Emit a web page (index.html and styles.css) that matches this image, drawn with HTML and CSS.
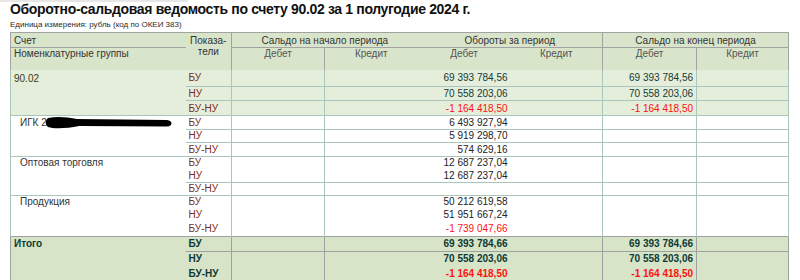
FILE: index.html
```html
<!DOCTYPE html>
<html lang="ru">
<head>
<meta charset="utf-8">
<title>ОСВ 90.02</title>
<link rel="stylesheet" href="styles.css">
</head>
<body>
<div class="topbar"></div>
<div class="page">
  <h1 class="title">Оборотно-сальдовая ведомость по счету 90.02 за 1 полугодие 2024 г.</h1>
  <div class="unit">Единица измерения: рубль (код по ОКЕИ 383)</div>
  <table class="osv">
    <colgroup>
      <col class="c-acc"><col class="c-ind"><col class="c-num"><col class="c-num"><col class="c-num"><col class="c-num2"><col class="c-num3"><col class="c-num2">
    </colgroup>
    <thead>
      <tr class="hr1">
        <th class="h-left">Счет</th>
        <th class="h-ind" rowspan="2">Показа-<br>тели</th>
        <th class="h-grp vl" colspan="2">Сальдо на начало периода</th>
        <th class="h-grp" colspan="2">Обороты за период</th>
        <th class="h-grp vl vr" colspan="2">Сальдо на конец периода</th>
      </tr>
      <tr class="hr2">
        <th class="h-left">Номенклатурные группы</th>
        <th class="h-sub vl">Дебет</th>
        <th class="h-sub vl">Кредит</th>
        <th class="h-sub">Дебет</th>
        <th class="h-sub">Кредит</th>
        <th class="h-sub vl">Дебет</th>
        <th class="h-sub vl vr">Кредит</th>
      </tr>
    </thead>
    <tbody class="acc">
      <tr class="r17">
        <td class="name">90.02</td><td class="ind">БУ</td><td></td><td></td><td class="num">69 393 784,56</td><td></td><td class="num">69 393 784,56</td><td></td>
      </tr>
      <tr class="r14 sep">
        <td></td><td class="ind">НУ</td><td></td><td></td><td class="num">70 558 203,06</td><td></td><td class="num">70 558 203,06</td><td></td>
      </tr>
      <tr class="r15 sep">
        <td></td><td class="ind">БУ-НУ</td><td></td><td></td><td class="num neg">-1 164 418,50</td><td></td><td class="num neg">-1 164 418,50</td><td></td>
      </tr>
    </tbody>
    <tbody class="grp">
      <tr class="r13 top">
        <td class="sub">ИГК 2<svg class="redact" width="128" height="13" viewBox="0 0 128 13" aria-hidden="true"><path d="M3 2 C12 0 22 1 32 3 L122 4 C128 4.5 128 10.5 122 10.5 L34 10 C22 12.5 9 13 3 11 C0 9 0 4 3 2 Z" fill="#000"/></svg></td><td class="ind">БУ</td><td></td><td></td><td class="num">6 493 927,94</td><td></td><td></td><td></td>
      </tr>
      <tr class="r13 sep">
        <td></td><td class="ind">НУ</td><td></td><td></td><td class="num">5 919 298,70</td><td></td><td></td><td></td>
      </tr>
      <tr class="r14 sep">
        <td></td><td class="ind">БУ-НУ</td><td></td><td></td><td class="num">574 629,16</td><td></td><td></td><td></td>
      </tr>
    </tbody>
    <tbody class="grp">
      <tr class="r13 top">
        <td class="sub">Оптовая торговля</td><td class="ind">БУ</td><td></td><td></td><td class="num">12 687 237,04</td><td></td><td></td><td></td>
      </tr>
      <tr class="r13">
        <td></td><td class="ind">НУ</td><td></td><td></td><td class="num">12 687 237,04</td><td></td><td></td><td></td>
      </tr>
      <tr class="r13 sep">
        <td></td><td class="ind">БУ-НУ</td><td></td><td></td><td></td><td></td><td></td><td></td>
      </tr>
    </tbody>
    <tbody class="grp">
      <tr class="r13 top">
        <td class="sub">Продукция</td><td class="ind">БУ</td><td></td><td></td><td class="num">50 212 619,58</td><td></td><td></td><td></td>
      </tr>
      <tr class="r13">
        <td></td><td class="ind">НУ</td><td></td><td></td><td class="num">51 951 667,24</td><td></td><td></td><td></td>
      </tr>
      <tr class="r15">
        <td></td><td class="ind">БУ-НУ</td><td></td><td></td><td class="num neg">-1 739 047,66</td><td></td><td></td><td></td>
      </tr>
    </tbody>
    <tbody class="total">
      <tr class="r15 top">
        <td class="name">Итого</td><td class="ind">БУ</td><td></td><td></td><td class="num">69 393 784,66</td><td></td><td class="num">69 393 784,66</td><td></td>
      </tr>
      <tr class="r15 sep">
        <td></td><td class="ind">НУ</td><td></td><td></td><td class="num">70 558 203,06</td><td></td><td class="num">70 558 203,06</td><td></td>
      </tr>
      <tr class="r15">
        <td></td><td class="ind">БУ-НУ</td><td></td><td></td><td class="num neg">-1 164 418,50</td><td></td><td class="num neg">-1 164 418,50</td><td></td>
      </tr>
    </tbody>
  </table>
</div>
</body>
</html>
```

FILE: styles.css
```css
* { box-sizing: border-box; }

html, body {
  margin: 0;
  background: #ffffff;
}

body {
  font-family: "Liberation Sans", Arial, sans-serif;
  color: #222;
}

.topbar {
  width: 188px;
  height: 2px;
  background: #e6e6e6;
}

.page {
  padding-left: 10px;
}

.title {
  margin: 0;
  font-size: 14px;
  line-height: 15px;
  font-weight: bold;
  letter-spacing: -0.35px;
  color: #111;
}

.unit {
  margin: 2px 0 2px;
  font-size: 8px;
  line-height: 11px;
  color: #2a2a2a;
}

.osv {
  border-collapse: collapse;
  table-layout: fixed;
  width: 779px;
  font-size: 10px;
  line-height: 11px;
}

.c-acc { width: 175px; }
.c-ind { width: 46px; }
.c-num { width: 93px; }
.c-num2 { width: 92px; }
.c-num3 { width: 94px; }

.osv thead th {
  background: #d9e5cb;
  font-weight: normal;
  color: #333;
  padding: 0;
  border-color: #a3a3a3;
}
.hr1 { height: 15px; }
.hr1 th { border-top: 1px solid #a3a3a3; }
.hr2 { height: 22px; }
.hr2 th { border-top: 1px solid #a3a3a3; vertical-align: top; padding-top: 2px; }
.osv thead th.h-left { text-align: left; padding-left: 3px; border-left: 1px solid #a3a3a3; }
.hr1 th.h-left { vertical-align: middle; }
.osv thead th.h-ind { vertical-align: top; padding-top: 2px; text-align: center; }
.osv thead th.h-grp { text-align: center; }
.osv thead th.h-sub { text-align: center; color: #555; }
.osv thead .vl { border-left: 1px solid #a3a3a3; }
.osv thead .vr { border-right: 1px solid #a3a3a3; }

.osv tbody td {
  padding: 0 3px;
  white-space: nowrap;
  overflow: visible;
  border-color: #a9c5bc;
}
.osv tbody td:nth-child(1),
.osv tbody td:nth-child(3),
.osv tbody td:nth-child(4),
.osv tbody td:nth-child(7),
.osv tbody td:nth-child(8) {
  border-left: 1px solid #a9c5bc;
}
.osv tbody td:nth-child(8) { border-right: 1px solid #a9c5bc; }

.osv tbody tr.top td { border-top: 1px solid #a9c5bc; }
.osv tbody tr.sep td:not(:first-child) { border-top: 1px solid #a9c5bc; }

.r13 { height: 13px; }
.r14 { height: 14px; }
.r15 { height: 15px; }
.r17 { height: 17px; }

.acc td { background: #e5eedb; }
.grp td { background: #ffffff; }

.name { color: #3a3a14; }
.sub { padding-left: 9px !important; color: #333; }
.ind { color: #7a2c18; }
.num { text-align: right; color: #222; }
.acc .num { color: #123a36; }
.neg, .acc .neg { color: #ff1010; }

.redact {
  vertical-align: -3px;
  margin-left: -2px;
}

.total td {
  background: #d7e4c7;
  font-weight: bold;
  color: #0d3a36;
  border-color: #a0a0a0 !important;
}
.total .ind { color: #0d3a36; }
.total .num { color: #0d3a36; }
.total .neg { color: #ff1010; }
.total .name { color: #0d3a36; }
```
